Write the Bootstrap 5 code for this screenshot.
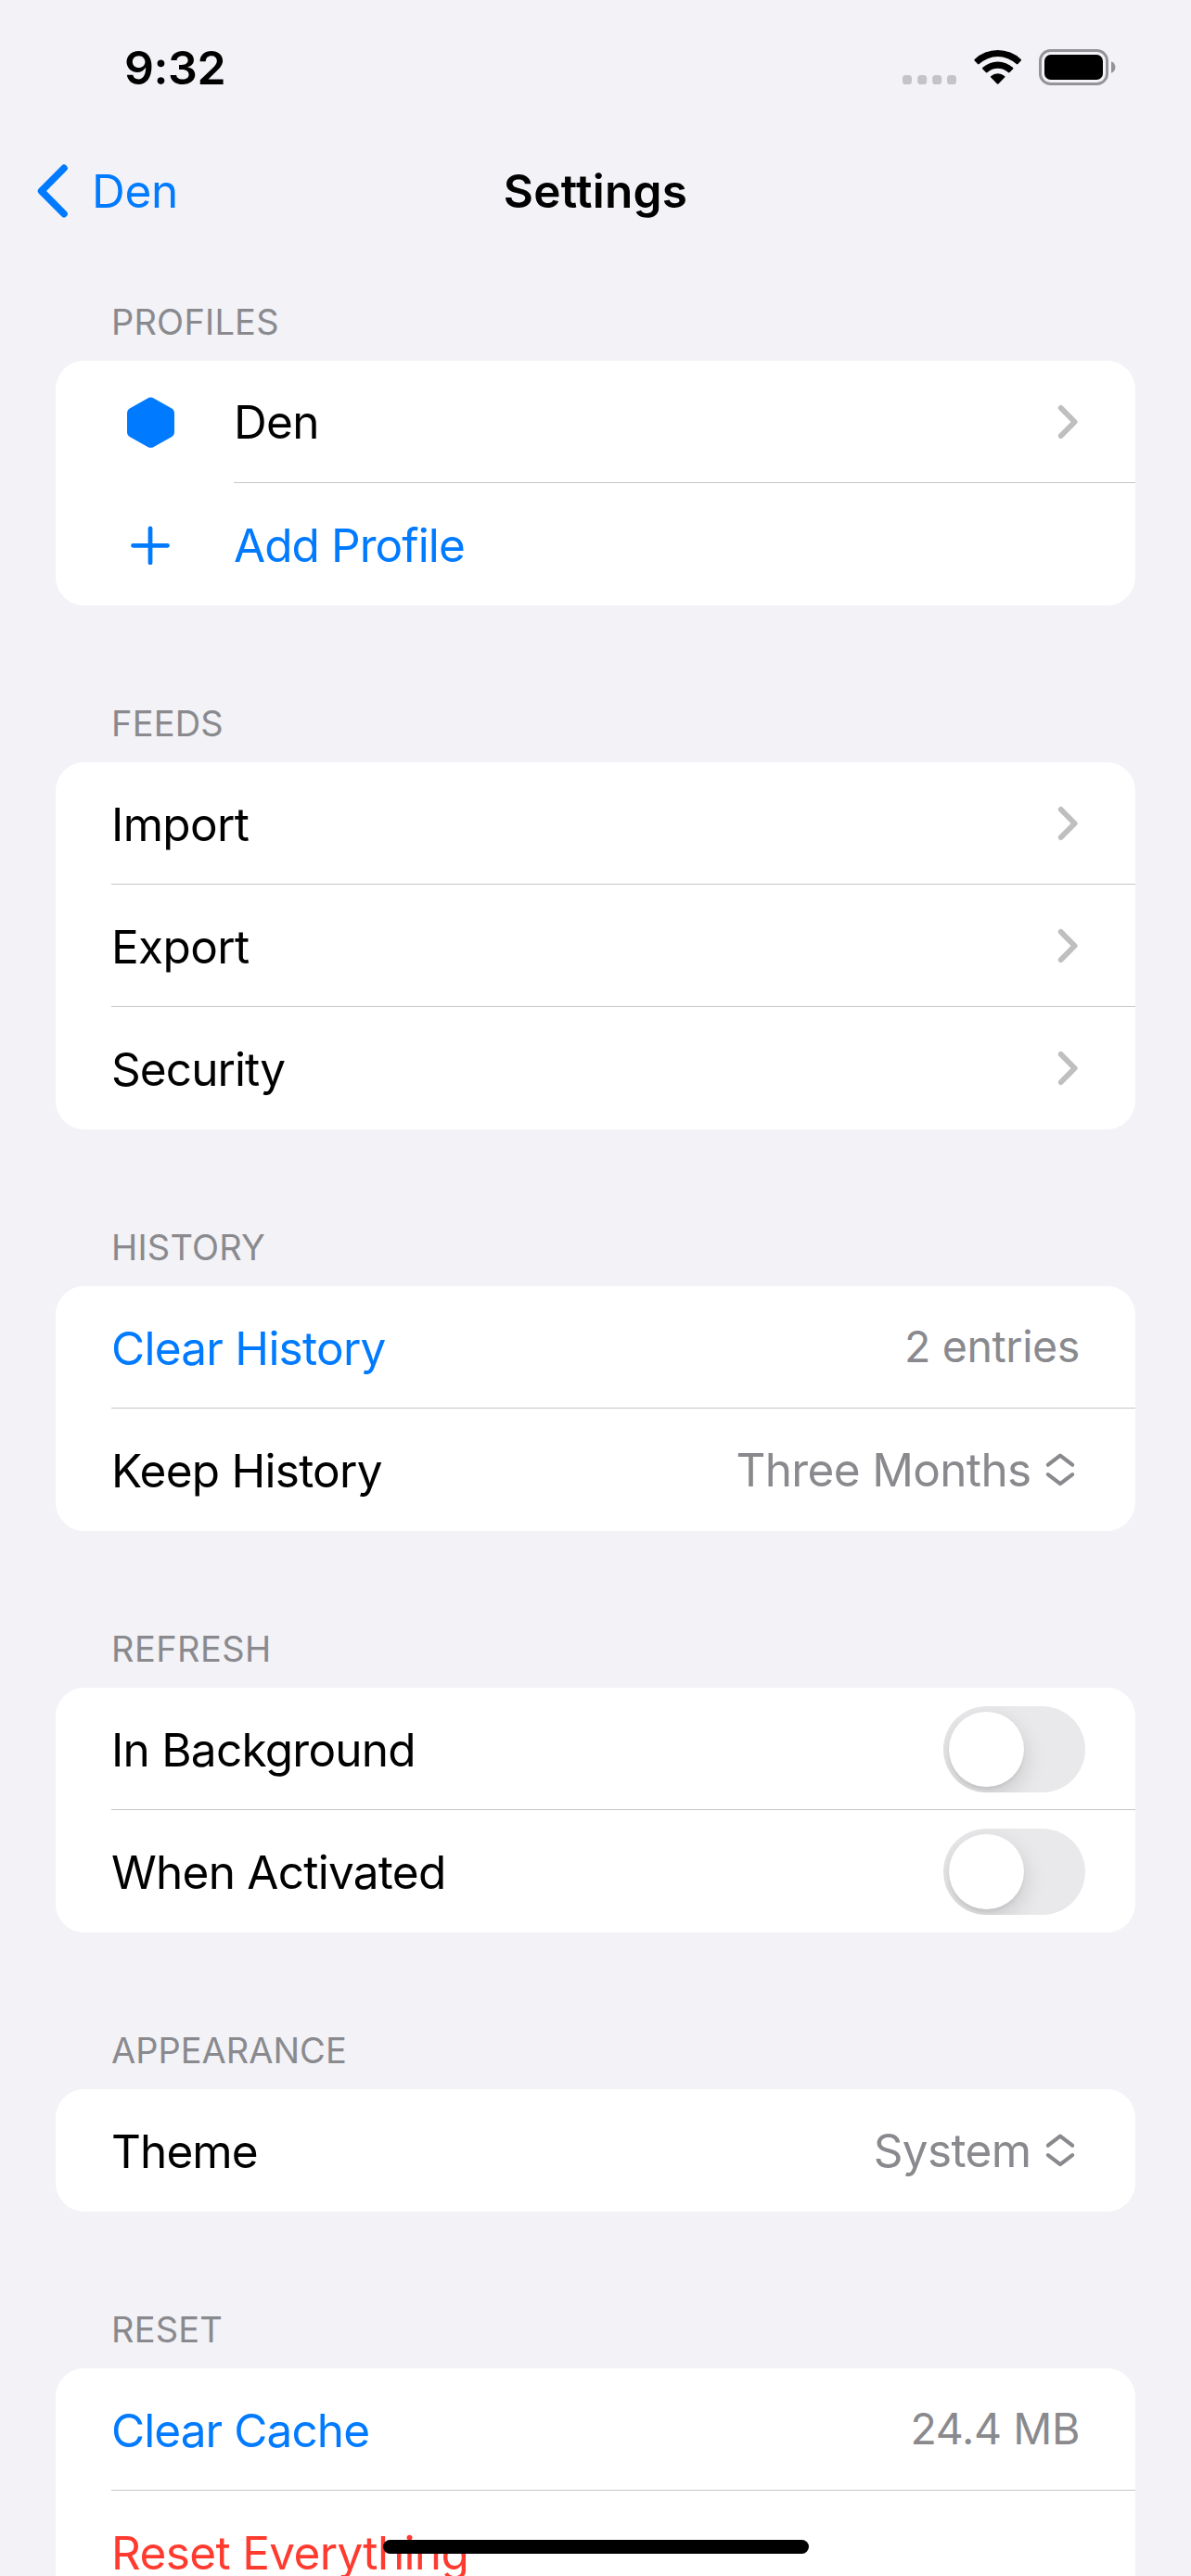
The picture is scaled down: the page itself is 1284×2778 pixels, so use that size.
<!DOCTYPE html>
<html lang="en">
<head>
<meta charset="utf-8">
<meta name="viewport" content="width=device-width, initial-scale=1">
<title>Settings</title>
<link href="https://cdn.jsdelivr.net/npm/bootstrap@5.3.0/dist/css/bootstrap.min.css" rel="stylesheet">
<style>
  :root { --ios-blue: #007aff; --ios-red: #ff3b30; --ios-gray: #8a8a8e; --ios-bg: #f2f2f7; }
  body { background: var(--ios-bg); color: #000; font-family: Inter, "Liberation Sans", sans-serif; font-size: 49.5px; line-height: 60px; letter-spacing: -.75px; }
  .screen { width: 1284px; height: 2778px; }
  svg { display: block; flex: none; }
  .status-bar { height: 141px; padding: 4px 81px 0 134px; font-size: 50px; font-weight: 600; letter-spacing: -.4px; }
  .top-bar { height: 132px; padding: 0 40px 2px; }
  .back-link { gap: 26px; color: var(--ios-blue); letter-spacing: -.3px; }
  .top-title { font-weight: 600; letter-spacing: .3px; }
  .group { margin: 0 60px; }
  .group-label { margin: 103px 60px 0; padding-bottom: 18px; height: 66px; line-height: 48px; font-size: 38px; font-weight: 400; letter-spacing: .2px; color: var(--ios-gray); }
  .group-first .group-label { margin-top: 50px; }
  .group-card { border-radius: 31px; overflow: hidden; background: #fff; }
  .group-row { padding: 0 0 0 60px; border: 0; height: 132px; background: #fff; color: #000; }
  .row-body { border-bottom: 1px solid #c6c6c8; padding: 2px 60px 0 0; }
  .row-body > svg { margin-bottom: 2px; }
  .group-row:last-child .row-body { border-bottom-color: transparent; }
  .row-icon { width: 84px; margin-right: 48px; padding-top: 1px; }
  .row-value { font-size: 46.5px; letter-spacing: -.38px; color: var(--ios-gray); padding-bottom: 3px; }
  .row-picker { gap: 10.5px; color: var(--ios-gray); padding-bottom: 2px; letter-spacing: -.65px; }
  .tint { color: var(--ios-blue); }
  .danger { color: var(--ios-red); }
  .tight { letter-spacing: -.92px; }
  .loose { letter-spacing: -.65px; }
  .raised { padding-bottom: 2px; }
  .caps-wide { letter-spacing: .45px; }
  .caps-tight { letter-spacing: 0; }
  .toggle { width: 153px; height: 93px; margin-right: -6px; padding: 6px; border-radius: 47px; background: #e9e9eb; overflow: hidden; }
  .toggle-knob { width: 81px; height: 81px; border-radius: 50%; background: #fff; box-shadow: 0 9px 24px rgba(0,0,0,.15), 0 3px 3px rgba(0,0,0,.05); }
  .home-indicator { left: 413px; bottom: 24px; width: 459px; height: 15px; border-radius: 8px; background: #000; }
</style>
</head>
<body>
<svg class="d-none" aria-hidden="true">
  <symbol id="chevron" viewBox="0 0 24 38"><path d="M3.8 4 18.6 19 3.8 34" fill="none" stroke="#bfbfbf" stroke-width="6" stroke-linecap="round" stroke-linejoin="round"/></symbol>
  <symbol id="updown" viewBox="0 0 42 38"><path d="M7.9 13.7 21 3.6 34.1 13.7M7.9 24.1 21 34.2 34.1 24.1" fill="none" stroke="#8a8a8e" stroke-width="4.2" stroke-linecap="round" stroke-linejoin="round"/></symbol>
</svg>
<div class="screen position-relative overflow-hidden">
  <header>
    <div class="status-bar d-flex align-items-center justify-content-between">
      <span>9:32</span>
      <svg width="230" height="40" viewBox="973 53 230 40">
        <g fill="#c4c3c8"><rect x="973" y="81" width="10" height="10" rx="3.6"/><rect x="989.2" y="81" width="10" height="10" rx="3.6"/><rect x="1005.2" y="81" width="10" height="10" rx="3.6"/><rect x="1021" y="81" width="10" height="10" rx="3.6"/></g>
        <path d="M1050.7 63.9a36.5 36.5 0 0 1 50 0q.8.8 0 1.6l-3.3 3.5q-.8.8-1.6.1a29.2 29.2 0 0 0-40.2 0q-.8.7-1.6-.1l-3.3-3.5q-.8-.8 0-1.6zM1059.5 72.8a24 24 0 0 1 32.4 0q.9.8.1 1.6l-3.5 3.6q-.8.7-1.6.1a16.8 16.8 0 0 0-22.4 0q-.8.6-1.6-.1l-3.5-3.6q-.8-.8.1-1.6zM1068.4 82a11.4 11.4 0 0 1 14.600 0q.9.8.1 1.600l-6.500 6.600q-.9.900-1.800 0l-6.500-6.600q-.8-.8.1-1.600z"/>
        <rect x="1121.500" y="54.500" width="72" height="36" rx="11" fill="none" stroke="#949498" stroke-width="3"/>
        <rect x="1126" y="59" width="63" height="27" rx="6.800"/>
        <path d="M1198 66.200q4.400 1.800 4.400 6.300t-4.400 6.300z" fill="#949498"/>
      </svg>
    </div>
    <nav class="top-bar row g-0 align-items-center">
      <div class="col"><a class="back-link d-inline-flex align-items-center text-decoration-none align-top" href="#">
        <svg width="33" height="58" viewBox="0 0 33 58"><path d="M29 4.400 4.600 29 29 53.600" fill="none" stroke="#007aff" stroke-width="7.600" stroke-linecap="round" stroke-linejoin="round"/></svg>Den</a></div>
      <div class="top-title col-auto">Settings</div>
      <div class="col"></div>
    </nav>
  </header>

  <main>
    <section class="group group-first">
      <h2 class="group-label">PROFILES</h2>
      <ul class="group-card list-group list-group-flush">
        <li class="group-row list-group-item d-flex">
          <div class="row-icon d-flex align-items-center justify-content-center"><svg width="51" height="55" viewBox="0 0 51 55"><path d="M22.300 1.500q3.200-1.800 6.400 0L47.800 12.200q3.200 1.800 3.200 5.500v20q0 3.700-3.200 5.500L28.700 53.900q-3.200 1.800-6.400 0L3.200 43.200Q0 41.400 0 37.700v-20q0-3.700 3.200-5.500z" fill="#007aff"/></svg></div>
          <div class="row-body flex-fill d-flex align-items-center justify-content-between"><span class="loose raised">Den</span><svg width="24" height="38"><use href="#chevron"/></svg></div>
        </li>
        <li class="group-row list-group-item d-flex">
          <div class="row-icon d-flex align-items-center justify-content-center"><svg width="42" height="42" viewBox="0 0 42 42"><path d="M21 2.800v37M2.500 21.300h37" fill="none" stroke="#007aff" stroke-width="4.800" stroke-linecap="round"/></svg></div>
          <div class="row-body flex-fill d-flex align-items-center tint"><span class="tight">Add Profile</span></div>
        </li>
      </ul>
    </section>

    <section class="group">
      <h2 class="group-label">FEEDS</h2>
      <ul class="group-card list-group list-group-flush">
        <li class="group-row list-group-item d-flex"><div class="row-body flex-fill d-flex align-items-center justify-content-between"><span class="loose">Import</span><svg width="24" height="38"><use href="#chevron"/></svg></div></li>
        <li class="group-row list-group-item d-flex"><div class="row-body flex-fill d-flex align-items-center justify-content-between"><span class="loose">Export</span><svg width="24" height="38"><use href="#chevron"/></svg></div></li>
        <li class="group-row list-group-item d-flex"><div class="row-body flex-fill d-flex align-items-center justify-content-between"><span class="tight">Security</span><svg width="24" height="38"><use href="#chevron"/></svg></div></li>
      </ul>
    </section>

    <section class="group">
      <h2 class="group-label">HISTORY</h2>
      <ul class="group-card list-group list-group-flush">
        <li class="group-row list-group-item d-flex"><div class="row-body flex-fill d-flex align-items-center justify-content-between"><span class="tint">Clear History</span><span class="row-value">2 entries</span></div></li>
        <li class="group-row list-group-item d-flex"><div class="row-body flex-fill d-flex align-items-center justify-content-between"><span>Keep History</span><span class="row-picker d-flex align-items-center">Three Months<svg width="42" height="38"><use href="#updown"/></svg></span></div></li>
      </ul>
    </section>

    <section class="group">
      <h2 class="group-label caps-wide">REFRESH</h2>
      <ul class="group-card list-group list-group-flush">
        <li class="group-row list-group-item d-flex"><div class="row-body flex-fill d-flex align-items-center justify-content-between"><span>In Background</span><div class="toggle" role="switch" aria-checked="false"><div class="toggle-knob"></div></div></div></li>
        <li class="group-row list-group-item d-flex"><div class="row-body flex-fill d-flex align-items-center justify-content-between"><span>When Activated</span><div class="toggle" role="switch" aria-checked="false"><div class="toggle-knob"></div></div></div></li>
      </ul>
    </section>

    <section class="group">
      <h2 class="group-label caps-tight">APPEARANCE</h2>
      <ul class="group-card list-group list-group-flush">
        <li class="group-row list-group-item d-flex"><div class="row-body flex-fill d-flex align-items-center justify-content-between"><span class="tight">Theme</span><span class="row-picker d-flex align-items-center">System<svg width="42" height="38"><use href="#updown"/></svg></span></div></li>
      </ul>
    </section>

    <section class="group">
      <h2 class="group-label">RESET</h2>
      <ul class="group-card list-group list-group-flush">
        <li class="group-row list-group-item d-flex"><div class="row-body flex-fill d-flex align-items-center justify-content-between"><span class="tint tight">Clear Cache</span><span class="row-value">24.4 MB</span></div></li>
        <li class="group-row list-group-item d-flex"><div class="row-body flex-fill d-flex align-items-center"><span class="danger loose">Reset Everything</span></div></li>
      </ul>
    </section>
  </main>
  <div class="home-indicator position-absolute"></div>
</div>
<script src="https://cdn.jsdelivr.net/npm/bootstrap@5.3.0/dist/js/bootstrap.bundle.min.js"></script>
</body>
</html>
